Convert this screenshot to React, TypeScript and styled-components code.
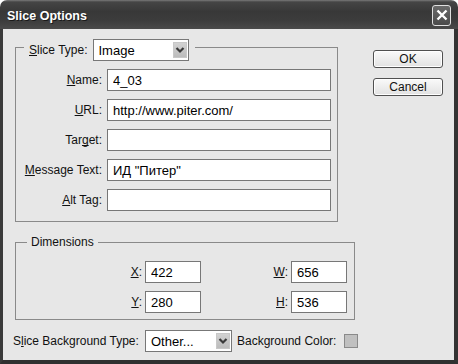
import React from "react";
import styled, { createGlobalStyle } from "styled-components";

const Global = createGlobalStyle`
  html, body { margin: 0; padding: 0; background: #ffffff; }
  body { font-family: "Liberation Sans", Arial, sans-serif; }
  * { box-sizing: border-box; }
`;

const Window = styled.div`
  width: 458px;
  height: 364px;
  display: flex;
  flex-direction: column;
`;

const TitleBar = styled.div`
  height: 29px;
  flex: 0 0 29px;
  display: flex;
  align-items: center;
  justify-content: space-between;
  padding: 2px 7px 0 7px;
  border-radius: 7px 7px 0 0;
  background: linear-gradient(#7a7a7a 0px, #454545 2px, #383838 40%, #3c3c3c 70%, #4a4a4a 100%);
`;

const Title = styled.span`
  color: #ffffff;
  font-family: "Liberation Sans", Arial, sans-serif;
  font-weight: bold;
  font-size: 12.5px;
  text-shadow: 1px 1px 0 #1a1a1a;
`;

const CloseButton = styled.div`
  width: 19px;
  height: 21px;
  border: 1px solid #e0e0e0;
  border-radius: 3px;
  background: linear-gradient(#6a6a6a, #4a4a4a);
  display: flex;
  align-items: center;
  justify-content: center;
  margin-top: -1px;
`;

const Frame = styled.div`
  flex: 1;
  display: flex;
  flex-direction: column;
  background: #e7e7e7;
  border-left: 3px solid #3a3a3a;
  border-right: 4px solid #333333;
  border-bottom: 4px solid #303030;
  padding: 18px 0 8px 10px;
`;

const TopSection = styled.div`
  display: flex;
  align-items: flex-start;
`;

const Group = styled.div<{ $width: number; $pb: number; $pr: number; $mt?: number }>`
  width: ${(p) => p.$width}px;
  margin: ${(p) => p.$mt ?? 0}px 0 0 2px;
  border: 1px solid #8a8a8a;
  padding: 0 ${(p) => p.$pr}px ${(p) => p.$pb}px 0;
`;

const SliceHeader = styled.div`
  display: flex;
  align-items: center;
  gap: 5px;
  width: fit-content;
  height: 22px;
  margin: -9px 0 0 8px;
  padding: 0 6px 0 5px;
  background: #e7e7e7;
`;

const DimHeader = styled.div`
  width: fit-content;
  height: 15px;
  line-height: 15px;
  margin: -8px 0 0 11px;
  padding: 0 4px;
  background: #e7e7e7;
  font-size: 12px;
  color: #111;
`;

const Label = styled.span`
  font-family: "Liberation Sans", Arial, sans-serif;
  font-size: 12px;
  color: #111;
  white-space: nowrap;
`;

const FieldLabel = styled(Label)`
  text-align: right;
`;

const DimLabel = styled(Label)`
  text-align: right;
  padding-right: 3px;
`;

const Key = styled.span`
  text-decoration: underline;
  text-decoration-skip-ink: none;
`;

const FieldsGrid = styled.div`
  display: grid;
  grid-template-columns: 86px 224px;
  column-gap: 5px;
  row-gap: 8px;
  align-items: center;
  margin-top: 8px;
`;

const DimGrid = styled.div`
  display: grid;
  grid-template-columns: 129px 56px 90px 56px;
  row-gap: 8px;
  align-items: center;
  margin-top: 11px;
`;

const TextInput = styled.input`
  height: 22px;
  width: 100%;
  margin: 0;
  border: 1px solid #777777;
  background: #ffffff;
  padding: 0 5px;
  font-family: "Liberation Sans", Arial, sans-serif;
  font-size: 13px;
  color: #000;
  outline: none;
  border-radius: 0;
`;

const SelectBox = styled.div<{ $width: number }>`
  width: ${(p) => p.$width}px;
  height: 22px;
  border: 1px solid #777777;
  background: #ffffff;
  display: flex;
  align-items: center;
  padding-left: 5px;
  font-family: "Liberation Sans", Arial, sans-serif;
  font-size: 13px;
  color: #000;
`;

const ArrowButton = styled.div`
  margin-left: auto;
  margin-right: 1px;
  width: 14px;
  height: 16px;
  background: linear-gradient(#d2d2d2, #bcbcbc);
  border: 1px solid #c8c8c8;
  display: flex;
  align-items: center;
  justify-content: center;
`;

const ButtonColumn = styled.div`
  display: flex;
  flex-direction: column;
  gap: 10px;
  margin: 3px 0 0 35px;
`;

const Button = styled.div`
  width: 70px;
  height: 18px;
  border: 1px solid #505050;
  border-radius: 3px;
  background: linear-gradient(#fafafa, #e2e2e2);
  box-shadow: inset 0 0 0 1px #ffffff;
  display: flex;
  align-items: center;
  justify-content: center;
  font-family: "Liberation Sans", Arial, sans-serif;
  font-size: 12px;
  color: #111;
`;

const BottomRow = styled.div`
  display: flex;
  align-items: center;
  height: 22px;
  margin-top: 10px;
`;

const BgTypeLabel = styled(Label)`
  flex: 0 0 132px;
`;

const BgColorLabel = styled(Label)`
  margin-left: 5px;
`;

const Swatch = styled.div`
  width: 14px;
  height: 14px;
  margin-left: 8px;
  background: #c0c0c0;
  border: 1px solid #8a8a8a;
`;

const Chevron = () => (
  <svg width="10" height="8" viewBox="0 0 10 8">
    <path d="M1.5 2 L5 5.5 L8.5 2" fill="none" stroke="#3a3a3a" strokeWidth="2.2" />
  </svg>
);

const Select = ({ width, value }: { width: number; value: string }) => (
  <SelectBox $width={width}>
    {value}
    <ArrowButton>
      <Chevron />
    </ArrowButton>
  </SelectBox>
);

const fields: { pre: string; key: string; post: string; value: string }[] = [
  { pre: "", key: "N", post: "ame:", value: "4_03" },
  { pre: "", key: "U", post: "RL:", value: "http://www.piter.com/" },
  { pre: "Tar", key: "g", post: "et:", value: "" },
  { pre: "", key: "M", post: "essage Text:", value: "ИД \"Питер\"" },
  { pre: "", key: "A", post: "lt Tag:", value: "" },
];

export default function App() {
  return (
    <>
      <Global />
      <Window>
        <TitleBar>
          <Title>Slice Options</Title>
          <CloseButton>
            <svg width="12" height="12" viewBox="0 0 12 12">
              <path d="M1.5 1.5 L10.5 10.5 M10.5 1.5 L1.5 10.5" stroke="#ffffff" strokeWidth="2.4" />
            </svg>
          </CloseButton>
        </TitleBar>
        <Frame>
          <TopSection>
            <Group $width={323} $pb={10} $pr={6}>
              <SliceHeader>
                <Label>
                  <Key>S</Key>lice Type:
                </Label>
                <Select width={96} value="Image" />
              </SliceHeader>
              <FieldsGrid>
                {fields.map((f) => (
                  <React.Fragment key={f.post}>
                    <FieldLabel>
                      {f.pre}
                      <Key>{f.key}</Key>
                      {f.post}
                    </FieldLabel>
                    <TextInput defaultValue={f.value} readOnly />
                  </React.Fragment>
                ))}
              </FieldsGrid>
            </Group>
            <ButtonColumn>
              <Button>OK</Button>
              <Button>Cancel</Button>
            </ButtonColumn>
          </TopSection>
          <Group $width={340} $pb={6} $pr={7} $mt={20}>
            <DimHeader>Dimensions</DimHeader>
            <DimGrid>
              <DimLabel>
                <Key>X</Key>:
              </DimLabel>
              <TextInput defaultValue="422" readOnly />
              <DimLabel>
                <Key>W</Key>:
              </DimLabel>
              <TextInput defaultValue="656" readOnly />
              <DimLabel>
                <Key>Y</Key>:
              </DimLabel>
              <TextInput defaultValue="280" readOnly />
              <DimLabel>
                <Key>H</Key>:
              </DimLabel>
              <TextInput defaultValue="536" readOnly />
            </DimGrid>
          </Group>
          <BottomRow>
            <BgTypeLabel>
              S<Key>l</Key>ice Background Type:
            </BgTypeLabel>
            <Select width={87} value="Other..." />
            <BgColorLabel>Background Color:</BgColorLabel>
            <Swatch />
          </BottomRow>
        </Frame>
      </Window>
    </>
  );
}
